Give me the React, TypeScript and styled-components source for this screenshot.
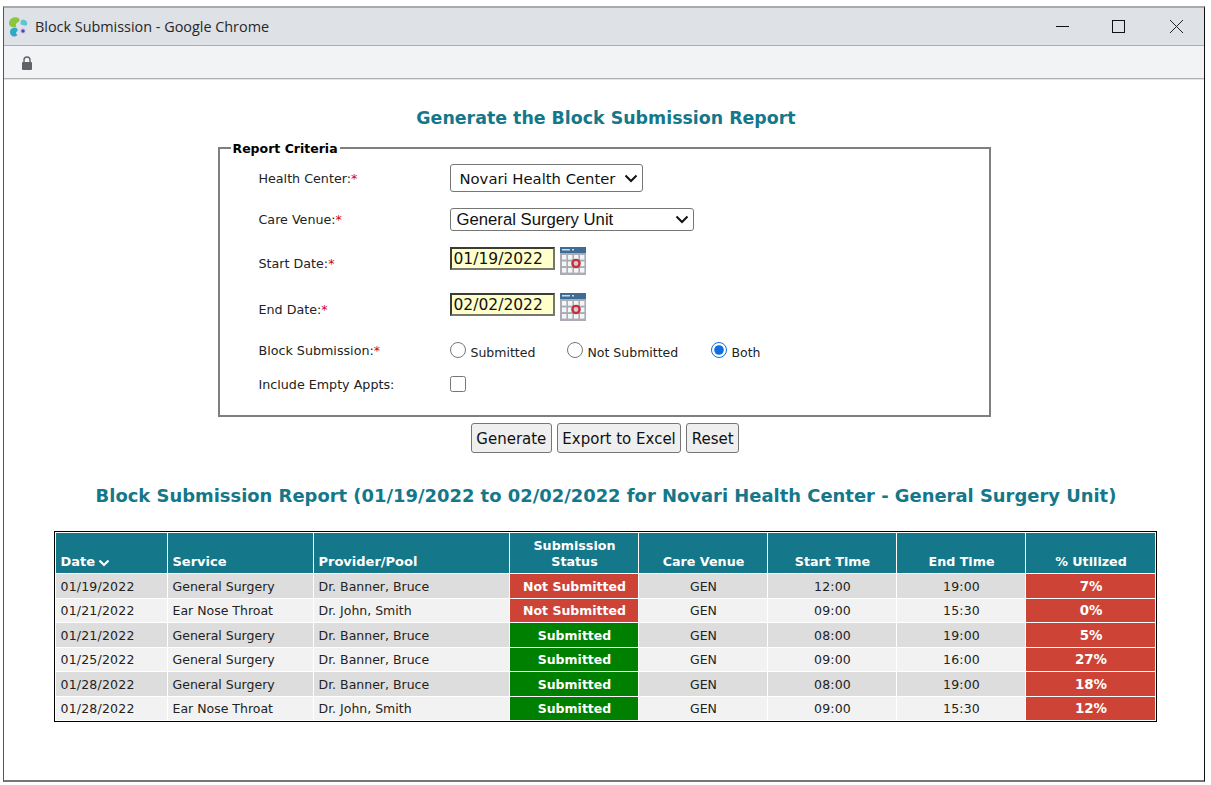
import React from 'react';
import styled, { createGlobalStyle } from 'styled-components';

const Global = createGlobalStyle`
  html, body { margin: 0; padding: 0; background: #fff; }
  body { font-family: "DejaVu Sans", Verdana, sans-serif; }
`;

const chevron = encodeURIComponent(
  '<svg xmlns="http://www.w3.org/2000/svg" width="14" height="9" viewBox="0 0 14 9"><path d="M1.5 1.5L7 7L12.5 1.5" fill="none" stroke="#111" stroke-width="2"/></svg>'
);

const Page = styled.div`
  width: 1211px;
  height: 785px;
  padding: 6px 6px 3px 3px;
  box-sizing: border-box;
  overflow: hidden;
`;
const Win = styled.div`
  height: 776px;
  box-sizing: border-box;
  border-top: 2px solid #a8a9aa;
  border-left: 1px solid #555;
  border-right: 1px solid #111;
  border-bottom: 2px solid #777;
  display: flex;
  flex-direction: column;
`;
const TitleBar = styled.div`
  height: 37px;
  flex: none;
  background: #dee1e6;
  border-bottom: 1px solid #acadae;
  display: flex;
  align-items: center;
  padding-left: 4px;
`;
const TitleText = styled.span`
  font: 14.4px "Open Sans", "Noto Sans", sans-serif;
  color: #24272b;
  margin-left: 6px;
  flex: 1;
`;
const WinButton = styled.div<{ $w: number }>`
  width: ${p => p.$w}px;
  height: 37px;
  display: flex;
  align-items: center;
  justify-content: center;
`;
const WinButtons = styled.div`
  display: flex;
`;
const AddressBar = styled.div`
  height: 33px;
  flex: none;
  background: #f1f3f4;
  border-bottom: 1px solid #aeafb0;
  box-shadow: 0 1px 0 #e4e4e4;
  display: flex;
  align-items: center;
  padding: 2px 0 0 17px;
  box-sizing: border-box;
`;
const Content = styled.div`
  flex: 1;
  display: flex;
  flex-direction: column;
  align-items: center;
  padding-left: 2px;
  color: #222;
`;
const Heading = styled.h2<{ $top: number; $size: number }>`
  margin: ${p => p.$top}px 0 0 2px;
  font-size: ${p => p.$size}px;
  line-height: 24px;
  font-weight: 700;
  color: #14778a;
  white-space: nowrap;
`;
const Field = styled.fieldset`
  width: 773px;
  height: 278px;
  margin: 9px 0 0 -2px;
  padding: 0 0 0 39px;
  box-sizing: border-box;
  border: 2px solid #7f7f7f;
  min-inline-size: 0;
`;
const Legend = styled.legend`
  margin-left: -28px;
  padding: 2px 2px 0;
  font-size: 12.5px;
  line-height: 16px;
  font-weight: 700;
  color: #000;
`;
const Rows = styled.div`
  display: flex;
  flex-direction: column;
  padding-top: 7px;
`;
const Row = styled.div<{ $h: number; $gap: number }>`
  height: ${p => p.$h}px;
  margin-bottom: ${p => p.$gap}px;
  display: grid;
  grid-template-columns: 191px 1fr;
  align-items: center;
`;
const Label = styled.label<{ $drop?: number }>`
  font-size: 12.7px;
  color: #222;
  position: relative;
  top: ${p => p.$drop ?? 0}px;
`;
const Req = styled.span`
  color: #d0021b;
`;
const Select = styled.select<{ $w: number; $h: number; $size: number; $font: string; $pad: number }>`
  appearance: none;
  width: ${p => p.$w}px;
  height: ${p => p.$h}px;
  padding: 0 0 0 ${p => p.$pad}px;
  font-family: ${p => p.$font};
  font-size: ${p => p.$size}px;
  background: #fff url("data:image/svg+xml,${chevron}") no-repeat right 4px center;
  color: #111;
  border: 1px solid #767676;
  border-radius: 3px;
  display: block;
`;
const DateWrap = styled.div`
  display: flex;
  align-items: flex-start;
  gap: 5px;
`;
const DateInput = styled.input`
  width: 105px;
  height: 23px;
  box-sizing: border-box;
  padding: 0 0 0 2px;
  font-family: "DejaVu Sans", sans-serif;
  font-size: 15.5px;
  color: #111;
  background: #ffffcc;
  border: 2px solid #3c3c32;
  border-right-color: #77776c;
  border-bottom-color: #77776c;
  outline: none;
`;
const Radios = styled.div`
  display: flex;
  align-items: center;
  padding-top: 4px;
`;
const RadioLabel = styled.label<{ $w: number }>`
  width: ${p => p.$w}px;
  display: flex;
  align-items: center;
  font-size: 12.5px;
  color: #222;
`;
const RadioInput = styled.input`
  width: 16px;
  height: 16px;
  margin: 0 5px 0 0;
  position: relative;
  top: -2px;
  accent-color: #0f6fe0;
`;
const Check = styled.input`
  width: 16px;
  height: 16px;
  margin: 0;
  display: block;
`;
const Buttons = styled.div`
  display: flex;
  gap: 5px;
  margin-top: 6px;
`;
const Btn = styled.button`
  height: 30px;
  padding: 1px 4.5px 0;
  font-family: "DejaVu Sans", sans-serif;
  font-size: 15px;
  color: #111;
  background: #efefef;
  border: 1px solid #767676;
  border-radius: 3px;
`;
const Table = styled.table`
  width: 1102px;
  margin: 23px 0 0 0;
  table-layout: fixed;
  border-collapse: separate;
  border-spacing: 1px;
  border: 1px solid #000;
  font-size: 12.5px;
`;
const Th = styled.th<{ $left?: boolean }>`
  background: #14778a;
  color: #fff;
  font-size: ${p => (p.$left ? 13 : 12.7)}px;
  line-height: 16px;
  font-weight: 700;
  height: 37px;
  vertical-align: bottom;
  padding: 0 3px 3px 5px;
  text-align: ${p => (p.$left ? 'left' : 'center')};
`;
const Tr = styled.tr<{ $alt: boolean }>`
  background: ${p => (p.$alt ? '#f2f2f2' : '#dddddd')};
  height: ${p => (p.$alt ? 23 : 24)}px;
`;
const Td = styled.td<{ $left?: boolean; $num?: boolean }>`
  padding: 0 4px;
  padding-left: ${p => (p.$left ? 5 : 6)}px;
  color: #222;
  letter-spacing: ${p => (p.$num ? 0.2 : 0)}px;
  text-align: ${p => (p.$left ? 'left' : 'center')};
  white-space: nowrap;
`;
const StatusTd = styled.td<{ $tone: 'red' | 'green'; $size?: number }>`
  padding: 0 3px 0 5px;
  text-align: center;
  font-size: ${p => p.$size ?? 12.5}px;
  font-weight: 700;
  color: #fff;
  background: ${p => (p.$tone === 'red' ? '#cd4436' : '#008000')};
  white-space: nowrap;
`;
const Caret = styled.svg`
  margin-left: 3px;
  vertical-align: -1px;
`;

const Logo = () => (
  <svg width="21" height="22" viewBox="0 0 21 22">
    <path d="M1 7 C1 1.5 8 0 10.5 2 C12.5 4 11.5 5.5 9.5 6.5 C7.5 7.5 7.5 9.5 8.5 11 C5 12 1 11 1 7Z" fill="#8cc63f" />
    <path d="M5 12 C8 11 10.5 13 9.5 15 C7.5 16 7.5 18 9.5 19 C6.5 22 2 20.5 2 16 C2 14 3 12.5 5 12Z" fill="#2fa8c9" />
    <path d="M13.5 4 C17 3 20 5.5 19 9 C17 10.5 14.5 8.5 12.5 8.5 C12.5 6.5 12.5 5 13.5 4Z" fill="#5ec4d8" />
    <circle cx="15" cy="15" r="3.2" fill="#d9d2ee" />
    <circle cx="15" cy="15" r="1.8" fill="#5a3fa8" />
  </svg>
);

const Lock = () => (
  <svg width="12" height="14" viewBox="0 0 12 14">
    <path d="M3 6 V4 a3 3 0 0 1 6 0 V6" fill="none" stroke="#5f6368" strokeWidth="1.4" />
    <rect x="1" y="6" width="10" height="8" rx="1" fill="#5f6368" />
  </svg>
);

const CalendarIcon = () => (
  <svg width="26" height="28" viewBox="0 0 26 28">
    <rect x="0" y="0" width="26" height="28" fill="#a9adb3" />
    <rect x="0" y="0" width="26" height="6" fill="#3f6c97" />
    <rect x="2" y="2" width="8" height="1.5" fill="#cfd9e4" />
    <rect x="12" y="2" width="2" height="1.5" fill="#cfd9e4" />
    {[0, 1, 2].map(r =>
      [0, 1, 2, 3].map(c => (
        <rect key={`${r}-${c}`} x={2 + c * 6} y={8 + r * 6.5} width="4.4" height="4.6" fill="#f4f5f7" />
      ))
    )}
    <circle cx="16" cy="16.5" r="3.6" fill="#d8c8cc" stroke="#c0303a" strokeWidth="2.4" />
  </svg>
);

type RowData = [string, string, string, string, 'red' | 'green', string, string, string];
const rows: RowData[] = [
  ['01/19/2022', 'General Surgery', 'Dr. Banner, Bruce', 'Not Submitted', 'red', '12:00', '19:00', '7%'],
  ['01/21/2022', 'Ear Nose Throat', 'Dr. John, Smith', 'Not Submitted', 'red', '09:00', '15:30', '0%'],
  ['01/21/2022', 'General Surgery', 'Dr. Banner, Bruce', 'Submitted', 'green', '08:00', '19:00', '5%'],
  ['01/25/2022', 'General Surgery', 'Dr. Banner, Bruce', 'Submitted', 'green', '09:00', '16:00', '27%'],
  ['01/28/2022', 'General Surgery', 'Dr. Banner, Bruce', 'Submitted', 'green', '08:00', '19:00', '18%'],
  ['01/28/2022', 'Ear Nose Throat', 'Dr. John, Smith', 'Submitted', 'green', '09:00', '15:30', '12%'],
];

export default function App() {
  return (
    <Page>
      <Global />
      <Win>
        <TitleBar>
          <Logo />
          <TitleText>Block Submission - Google Chrome</TitleText>
          <WinButtons>
            <WinButton $w={51}>
              <svg width="13" height="13" viewBox="0 0 13 13"><path d="M0 6.5H13" stroke="#111" strokeWidth="1" /></svg>
            </WinButton>
            <WinButton $w={61}>
              <svg width="13" height="13" viewBox="0 0 13 13"><rect x="0.5" y="0.5" width="12" height="12" fill="none" stroke="#111" strokeWidth="1" /></svg>
            </WinButton>
            <WinButton $w={55}>
              <svg width="13" height="13" viewBox="0 0 13 13"><path d="M0 0L13 13M13 0L0 13" stroke="#222" strokeWidth="1" /></svg>
            </WinButton>
          </WinButtons>
        </TitleBar>
        <AddressBar><Lock /></AddressBar>
        <Content>
          <Heading $top={27} $size={17.4}>Generate the Block Submission Report</Heading>
          <Field>
            <Legend>Report Criteria</Legend>
            <Rows>
              <Row $h={28} $gap={16}>
                <Label>Health Center:<Req>*</Req></Label>
                <Select $w={193} $h={28} $size={14.8} $pad={9} $font={'"DejaVu Sans", sans-serif'} defaultValue="n">
                  <option value="n">Novari Health Center</option>
                </Select>
              </Row>
              <Row $h={23} $gap={16}>
                <Label>Care Venue:<Req>*</Req></Label>
                <Select $w={244} $h={23} $size={16.7} $pad={6} $font={'"Liberation Sans", sans-serif'} defaultValue="g">
                  <option value="g">General Surgery Unit</option>
                </Select>
              </Row>
              <Row $h={28} $gap={18}>
                <Label $drop={2}>Start Date:<Req>*</Req></Label>
                <DateWrap>
                  <DateInput defaultValue="01/19/2022" />
                  <CalendarIcon />
                </DateWrap>
              </Row>
              <Row $h={28} $gap={18}>
                <Label $drop={2}>End Date:<Req>*</Req></Label>
                <DateWrap>
                  <DateInput defaultValue="02/02/2022" />
                  <CalendarIcon />
                </DateWrap>
              </Row>
              <Row $h={22} $gap={14}>
                <Label>Block Submission:<Req>*</Req></Label>
                <Radios>
                  <RadioLabel $w={117}><RadioInput type="radio" name="b" />Submitted</RadioLabel>
                  <RadioLabel $w={144}><RadioInput type="radio" name="b" />Not Submitted</RadioLabel>
                  <RadioLabel $w={60}><RadioInput type="radio" name="b" defaultChecked />Both</RadioLabel>
                </Radios>
              </Row>
              <Row $h={18} $gap={0}>
                <Label>Include Empty Appts:</Label>
                <Check type="checkbox" />
              </Row>
            </Rows>
          </Field>
          <Buttons>
            <Btn>Generate</Btn>
            <Btn>Export to Excel</Btn>
            <Btn>Reset</Btn>
          </Buttons>
          <Heading $top={31} $size={17.93}>Block Submission Report (01/19/2022 to 02/02/2022 for Novari Health Center - General Surgery Unit)</Heading>
          <Table>
            <colgroup>
              <col style={{ width: 111 }} />
              <col style={{ width: 145 }} />
              <col style={{ width: 195 }} />
              <col style={{ width: 128 }} />
              <col style={{ width: 128 }} />
              <col style={{ width: 128 }} />
              <col style={{ width: 128 }} />
              <col style={{ width: 129 }} />
            </colgroup>
            <thead>
              <tr>
                <Th $left>Date<Caret width="12" height="8" viewBox="0 0 12 8"><path d="M1.5 1.5L6 6L10.5 1.5" fill="none" stroke="#fff" strokeWidth="2.2" /></Caret></Th>
                <Th $left>Service</Th>
                <Th $left>Provider/Pool</Th>
                <Th>Submission<br />Status</Th>
                <Th>Care Venue</Th>
                <Th>Start Time</Th>
                <Th>End Time</Th>
                <Th>% Utilized</Th>
              </tr>
            </thead>
            <tbody>
              {rows.map((r, i) => (
                <Tr key={i} $alt={i % 2 === 1}>
                  <Td $left $num>{r[0]}</Td>
                  <Td $left>{r[1]}</Td>
                  <Td $left>{r[2]}</Td>
                  <StatusTd $tone={r[4]}>{r[3]}</StatusTd>
                  <Td>GEN</Td>
                  <Td $num>{r[5]}</Td>
                  <Td $num>{r[6]}</Td>
                  <StatusTd $tone="red" $size={13.4}>{r[7]}</StatusTd>
                </Tr>
              ))}
            </tbody>
          </Table>
        </Content>
      </Win>
    </Page>
  );
}
